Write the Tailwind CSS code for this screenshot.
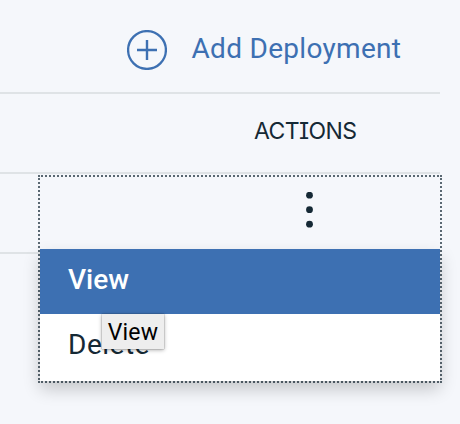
<!DOCTYPE html>
<html lang="en">
<head>
<meta charset="utf-8">
<title>Deployments</title>
<script src="https://cdn.jsdelivr.net/npm/@tailwindcss/browser@4"></script>
</head>
<body class="w-[460px] h-[424px] overflow-hidden bg-[#f5f7fb] font-['Roboto',sans-serif] text-[#152935]">
<main class="relative h-full pr-5">
  <header class="h-[94px] border-b-2 border-[#dfe3e6] flex items-center pl-[127px] pt-2 text-[#3d70b2]">
    <button class="flex items-center">
      <svg class="w-10 h-10 shrink-0" viewBox="0 0 40 40" fill="none" stroke="currentColor">
        <circle cx="20" cy="20" r="18.9" stroke-width="2.3"/>
        <path d="M20 10V30M10 20H30" stroke-width="2.4"/>
      </svg>
      <span class="ml-[24.5px] text-[28px] leading-9 tracking-[0.3px] whitespace-nowrap relative -top-px">Add Deployment</span>
    </button>
  </header>
  <div class="h-20 border-b-2 border-[#dfe3e6] flex items-center pl-[254px]">
    <span class="font-['Inter',sans-serif] text-[23px] leading-8 tracking-[-0.6px] [font-feature-settings:'cv08'] relative -top-[2px]">ACTIONS</span>
  </div>
  <div class="h-20 border-b-2 border-[#dfe3e6]"></div>
  <section class="absolute left-[38px] top-[175px] w-[404px] h-[208px] border-2 border-dotted border-[#5a6872] flex flex-col">
    <button class="h-[72px] shrink-0 pl-[266px] pt-[15px] flex items-start">
      <svg class="w-[7px] h-9" viewBox="0 0 7 36" fill="currentColor">
        <circle cx="3.5" cy="3.2" r="3.4"/><circle cx="3.5" cy="17.7" r="3.4"/><circle cx="3.5" cy="32.2" r="3.4"/>
      </svg>
    </button>
    <ul class="h-[132px] bg-white shadow-[0_8px_16px_rgba(0,0,0,0.2)] text-[28px]">
      <li class="h-[65px] bg-[#3d70b2] text-white font-medium pl-7 flex items-center pb-1">View</li>
      <li class="h-[67px] pl-7 tracking-[0.5px] flex items-center pb-[5px]">Delete</li>
    </ul>
  </section>
  <div class="absolute left-[102px] top-[314px] w-[62px] h-[35px] bg-[#eee] text-black text-[23px] tracking-[0.2px] flex items-center justify-center pt-[3px] shadow-[0_0_1px_rgba(0,0,0,0.5),0_1px_4px_rgba(0,0,0,0.35)]">View</div>
</main>
</body>
</html>
